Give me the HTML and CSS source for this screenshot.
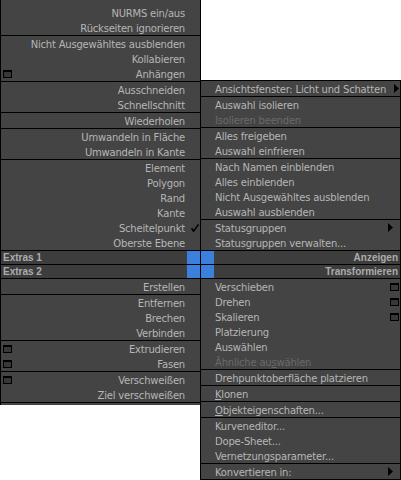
FILE: index.html
```html
<!DOCTYPE html>
<html>
<head>
<meta charset="utf-8">
<link rel="stylesheet" href="styles.css">
</head>
<body>
<div class="quad">
  <div class="panel left">
    <div class="group top">
      <div class="item"><span class="lead"></span><span class="label">NURMS ein/aus</span><span class="mark"></span></div>
      <div class="item"><span class="lead"></span><span class="label">Rückseiten ignorieren</span><span class="mark"></span></div>
    </div>
    <div class="group">
      <div class="item"><span class="lead"></span><span class="label">Nicht Ausgewähltes ausblenden</span><span class="mark"></span></div>
      <div class="item"><span class="lead"></span><span class="label">Kollabieren</span><span class="mark"></span></div>
      <div class="item"><span class="lead"><span class="win"></span></span><span class="label">Anhängen</span><span class="mark"></span></div>
    </div>
    <div class="group">
      <div class="item"><span class="lead"></span><span class="label">Ausschneiden</span><span class="mark"></span></div>
      <div class="item"><span class="lead"></span><span class="label">Schnellschnitt</span><span class="mark"></span></div>
    </div>
    <div class="group">
      <div class="item"><span class="lead"></span><span class="label">Wiederholen</span><span class="mark"></span></div>
    </div>
    <div class="group">
      <div class="item"><span class="lead"></span><span class="label">Umwandeln in Fläche</span><span class="mark"></span></div>
      <div class="item"><span class="lead"></span><span class="label">Umwandeln in Kante</span><span class="mark"></span></div>
    </div>
    <div class="group">
      <div class="item"><span class="lead"></span><span class="label">Element</span><span class="mark"></span></div>
      <div class="item"><span class="lead"></span><span class="label">Polygon</span><span class="mark"></span></div>
      <div class="item"><span class="lead"></span><span class="label">Rand</span><span class="mark"></span></div>
      <div class="item"><span class="lead"></span><span class="label">Kante</span><span class="mark"></span></div>
      <div class="item"><span class="lead"></span><span class="label">Scheitelpunkt</span><span class="mark"><svg class="check" width="8" height="8" viewBox="0 0 8 8"><path d="M0.6 4.2 L2.6 7.2 L7.6 0.4" fill="none" stroke="#000" stroke-width="1.5"/></svg></span></div>
      <div class="item"><span class="lead"></span><span class="label">Oberste Ebene</span><span class="mark"></span></div>
    </div>
    <div class="hdr"><span class="htext">Extras 1</span><span class="blue"></span></div>
    <div class="hdr"><span class="htext">Extras 2</span><span class="blue"></span></div>
    <div class="group">
      <div class="item"><span class="lead"></span><span class="label">Erstellen</span><span class="mark"></span></div>
    </div>
    <div class="group">
      <div class="item"><span class="lead"></span><span class="label">Entfernen</span><span class="mark"></span></div>
      <div class="item"><span class="lead"></span><span class="label">Brechen</span><span class="mark"></span></div>
      <div class="item"><span class="lead"></span><span class="label">Verbinden</span><span class="mark"></span></div>
    </div>
    <div class="group">
      <div class="item"><span class="lead"><span class="win"></span></span><span class="label">Extrudieren</span><span class="mark"></span></div>
      <div class="item"><span class="lead"><span class="win"></span></span><span class="label">Fasen</span><span class="mark"></span></div>
    </div>
    <div class="group">
      <div class="item"><span class="lead"><span class="win"></span></span><span class="label">Verschweißen</span><span class="mark"></span></div>
      <div class="item"><span class="lead"></span><span class="label">Ziel verschweißen</span><span class="mark"></span></div>
    </div>
    <div class="tail"></div>
  </div>

  <div class="panel right">
    <div class="group">
      <div class="item"><span class="label">Ansichtsfenster: Licht und Schatten</span><span class="end tight"><svg class="arrow" width="5" height="9" viewBox="0 0 5 9"><polygon points="0,0 5,4.5 0,9" fill="#000"/></svg></span></div>
    </div>
    <div class="group">
      <div class="item"><span class="label">Auswahl isolieren</span><span class="end"></span></div>
      <div class="item off"><span class="label">Isolieren beenden</span><span class="end"></span></div>
    </div>
    <div class="group">
      <div class="item"><span class="label">Alles freigeben</span><span class="end"></span></div>
      <div class="item"><span class="label">Auswahl einfrieren</span><span class="end"></span></div>
    </div>
    <div class="group">
      <div class="item"><span class="label">Nach Namen einblenden</span><span class="end"></span></div>
      <div class="item"><span class="label">Alles einblenden</span><span class="end"></span></div>
      <div class="item"><span class="label">Nicht Ausgewähltes ausblenden</span><span class="end"></span></div>
      <div class="item"><span class="label">Auswahl ausblenden</span><span class="end"></span></div>
    </div>
    <div class="group">
      <div class="item"><span class="label">Statusgruppen</span><span class="end sub"><svg class="arrow" width="5" height="9" viewBox="0 0 5 9"><polygon points="0,0 5,4.5 0,9" fill="#000"/></svg></span></div>
      <div class="item"><span class="label">Statusgruppen verwalten...</span><span class="end"></span></div>
    </div>
    <div class="hdr"><span class="blue"></span><span class="htext">Anzeigen</span></div>
    <div class="hdr"><span class="blue"></span><span class="htext">Transformieren</span></div>
    <div class="group">
      <div class="item"><span class="label">Verschieben</span><span class="end"><span class="win"></span></span></div>
      <div class="item"><span class="label">Drehen</span><span class="end"><span class="win"></span></span></div>
      <div class="item"><span class="label">Skalieren</span><span class="end"><span class="win"></span></span></div>
      <div class="item"><span class="label">Platzierung</span><span class="end"></span></div>
      <div class="item"><span class="label">Auswählen</span><span class="end"></span></div>
      <div class="item off"><span class="label">Ähnliche au<u>s</u>wählen</span><span class="end"></span></div>
    </div>
    <div class="group">
      <div class="item"><span class="label">Drehpunktoberfläche platzieren</span><span class="end"></span></div>
    </div>
    <div class="group">
      <div class="item"><span class="label"><u>K</u>lonen</span><span class="end"></span></div>
    </div>
    <div class="group">
      <div class="item"><span class="label"><u>O</u>bjekteigenschaften...</span><span class="end"></span></div>
    </div>
    <div class="group">
      <div class="item"><span class="label">Kurveneditor...</span><span class="end"></span></div>
      <div class="item"><span class="label">Dope-Sheet...</span><span class="end"></span></div>
      <div class="item"><span class="label">Vernetzungsparameter...</span><span class="end"></span></div>
    </div>
    <div class="group">
      <div class="item"><span class="label">Konvertieren in:</span><span class="end sub"><svg class="arrow" width="5" height="9" viewBox="0 0 5 9"><polygon points="0,0 5,4.5 0,9" fill="#000"/></svg></span></div>
    </div>
  </div>
</div>
</body>
</html>
```

FILE: styles.css
```css
html, body {
  margin: 0;
  padding: 0;
  background: #ffffff;
}

body {
  font-family: "DejaVu Sans", "Liberation Sans", sans-serif;
  font-size: 10px;
}

.quad {
  display: flex;
  align-items: flex-start;
}

.panel {
  display: flex;
  flex-direction: column;
  gap: 1px;
  background: #000;
  box-sizing: border-box;
  width: 201px;
}

.left {
  border-left: 1px solid #000;
  border-right: 1px solid #000;
}

.right {
  border: 1px solid #000;
  margin-left: -1px;
  margin-top: 80px;
}

.group {
  background: #444444;
}

.group.top {
  padding-top: 5px;
}

.item {
  height: 15px;
  display: flex;
  align-items: flex-start;
  color: #b6b6b6;
  white-space: nowrap;
  letter-spacing: -0.2px;
}

.item .label {
  line-height: 15px;
  padding-top: 1px;
}

.item.off {
  color: #6a6a6a;
}

.item u {
  text-decoration-thickness: 1px;
  text-underline-offset: 1px;
}

.left .lead {
  width: 9px;
  height: 15px;
  padding-left: 2px;
  display: flex;
  align-items: center;
}

.left .label {
  flex: 1;
  text-align: right;
}

.left .mark {
  width: 9px;
  height: 15px;
  padding-left: 6px;
  display: flex;
  align-items: center;
}

.right .item {
  padding-left: 14px;
}

.right .label {
  flex: 1;
  min-width: 0;
}

.right .end {
  height: 15px;
  display: flex;
  align-items: center;
  padding-right: 1px;
}

.right .end.sub {
  padding-right: 7px;
}

.right .end.tight {
  padding-right: 1px;
  margin-left: 1px;
}

.win {
  display: block;
  width: 9px;
  height: 8px;
  box-sizing: border-box;
  border: 1px solid #000;
  border-top-width: 2px;
  background: #383838;
}

.check, .arrow {
  display: block;
}

.tail {
  height: 2px;
  background: #454545;
}

.hdr {
  height: 13px;
  line-height: 13px;
  display: flex;
  font-family: "Liberation Sans", sans-serif;
  font-weight: bold;
  font-size: 10px;
  color: #acacac;
  white-space: nowrap;
}

.hdr .htext {
  flex: 1;
  background: #3d3d3d;
  padding: 0 2px 0 2px;
}

.right .hdr .htext {
  text-align: right;
}

.hdr .blue {
  width: 13px;
  background: #3b80dd;
}
```
